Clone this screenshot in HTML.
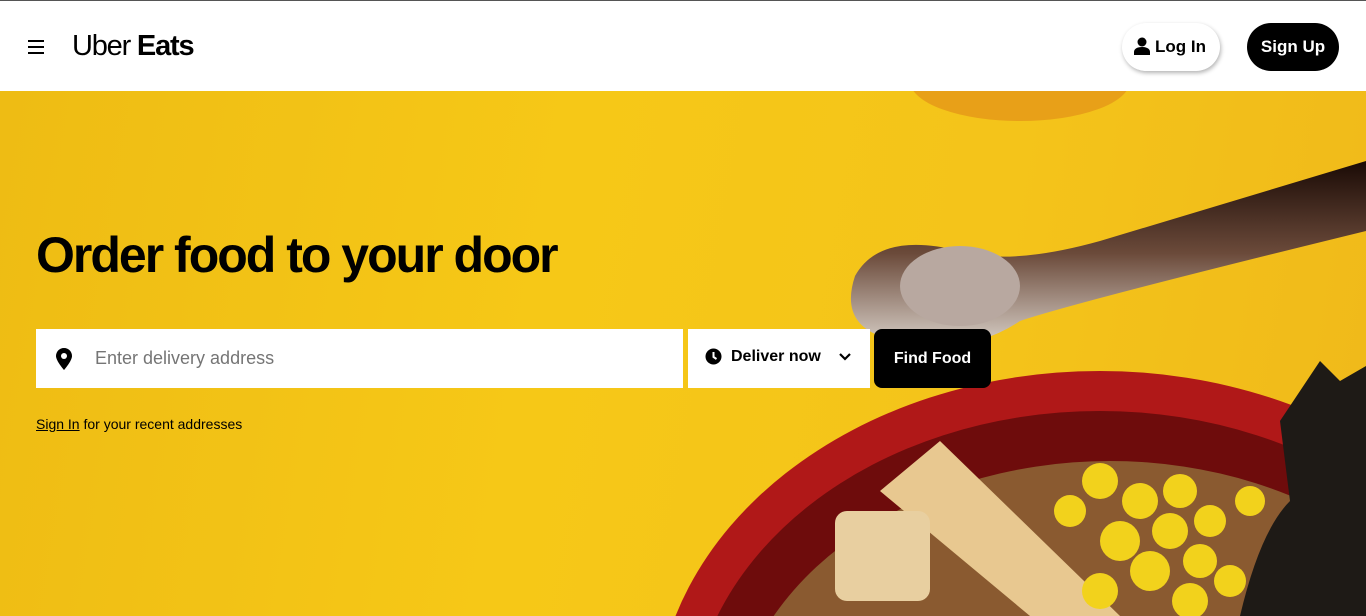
<!DOCTYPE html>
<html><head><meta charset="utf-8"><style>
*{margin:0;padding:0;box-sizing:border-box}
html,body{width:1366px;height:616px;overflow:hidden}
body{font-family:"Liberation Sans",Arial,sans-serif;background:#fff;position:relative}
.top{position:absolute;left:0;top:0;width:1366px;height:1px;background:#555}
header{position:absolute;top:1px;left:0;width:1366px;height:90px;background:#fff}
.burger{position:absolute;left:28px;top:39px;width:16px}
.burger i{display:block;height:2px;background:#000;margin-bottom:4px}
.logo{position:absolute;left:72px;top:29px;font-size:29px;letter-spacing:-1.2px;color:#000}
.logo b{font-weight:700}
.login{position:absolute;left:1122px;top:22px;width:98px;height:48px;border-radius:24px;background:#fff;box-shadow:1px 2px 4px rgba(0,0,0,.3);font-weight:700;font-size:17px;line-height:48px;padding-left:33px}
.signup{position:absolute;left:1247px;top:22px;width:92px;height:48px;border-radius:24px;background:#000;color:#fff;font-weight:700;font-size:17px;line-height:48px;text-align:center}
.hero{position:absolute;top:91px;left:0;width:1366px;height:525px;background:linear-gradient(100deg,#eebc14 0%,#f6c817 40%,#f4c41a 70%,#f0b91a 100%);overflow:hidden}
h1{position:absolute;left:36px;top:135px;font-size:50px;font-weight:700;letter-spacing:-2px;color:#000;white-space:nowrap}
.addr{position:absolute;left:36px;top:329px;width:647px;height:59px;background:#fff}
.addr span{position:absolute;left:59px;top:19px;font-size:18px;color:#757575}
.dl{position:absolute;left:688px;top:329px;width:182px;height:59px;background:#fff;font-weight:700;font-size:16px}
.dl span{position:absolute;left:43px;top:19px}
.ff{position:absolute;left:874px;top:329px;width:117px;height:59px;background:#000;border-radius:8px;color:#fff;font-weight:700;font-size:16px;line-height:59px;text-align:center}
.sign{position:absolute;left:36px;top:416px;font-size:14px;color:#000;white-space:nowrap}
.sign u{text-decoration:underline}
</style></head><body>
<div class="top"></div>
<header>
<div class="burger"><i></i><i></i><i></i></div>
<div class="logo">Uber <b>Eats</b></div>
<div class="login"><svg style="position:absolute;left:12px;top:14px" width="16" height="18" viewBox="0 0 16 18"><circle cx="8" cy="5" r="4.5"/><path d="M0 18v-3c0-3 3-5 8-5s8 2 8 5v3z"/></svg>Log In</div>
<div class="signup">Sign Up</div>
</header>
<div class="hero">
<svg width="1366" height="525" style="position:absolute;left:0;top:0">
<defs>
<linearGradient id="sp" x1="0" y1="0" x2="0" y2="1"><stop offset="0" stop-color="#1a0a05"/><stop offset=".5" stop-color="#6b4a3a"/><stop offset="1" stop-color="#d8d0c8"/></linearGradient>
</defs>
<ellipse cx="1020" cy="-10" rx="110" ry="40" fill="#e8a018"/>
<path d="M1366 70 L1100 150 Q1010 175 960 160 Q880 140 855 185 Q840 230 880 245 Q960 270 1020 230 Q1080 210 1366 140Z" fill="url(#sp)"/>
<ellipse cx="960" cy="195" rx="60" ry="40" fill="#b8a8a0"/>
<ellipse cx="1100" cy="630" rx="445" ry="350" fill="#b01818"/>
<ellipse cx="1100" cy="640" rx="410" ry="320" fill="#6e0c0c"/>
<ellipse cx="1110" cy="660" rx="380" ry="290" fill="#8a5a30"/>
<path d="M880 400 L940 350 L1120 525 L1030 525Z" fill="#e8c890"/>
<rect x="835" y="420" width="95" height="90" rx="12" fill="#e8cfa0"/>
<g fill="#f2d21c">
<circle cx="1100" cy="390" r="18"/><circle cx="1140" cy="410" r="18"/><circle cx="1070" cy="420" r="16"/><circle cx="1180" cy="400" r="17"/><circle cx="1170" cy="440" r="18"/><circle cx="1120" cy="450" r="20"/><circle cx="1210" cy="430" r="16"/><circle cx="1150" cy="480" r="20"/><circle cx="1200" cy="470" r="17"/><circle cx="1100" cy="500" r="18"/><circle cx="1230" cy="490" r="16"/><circle cx="1190" cy="510" r="18"/><circle cx="1250" cy="410" r="15"/></g>
<path d="M1280 330 L1320 270 L1340 290 L1366 275 L1366 525 L1240 525 Q1260 440 1290 410Z" fill="#1e1a16"/>
</svg>
<h1>Order food to your door</h1>
</div>
<div class="addr"><svg style="position:absolute;left:19px;top:19px" width="18" height="22" viewBox="0 0 18 22"><path d="M9 0C4 0 1 4 1 8c0 5 8 14 8 14s8-9 8-14c0-4-3-8-8-8z"/><circle cx="9" cy="8" r="3" fill="#fff"/></svg><span>Enter delivery address</span></div>
<div class="dl"><svg style="position:absolute;left:17px;top:19px" width="17" height="17" viewBox="0 0 17 17"><circle cx="8.5" cy="8.5" r="8"/><path d="M8.5 4v5l3 2" stroke="#fff" stroke-width="2" fill="none"/></svg><span>Deliver now</span><svg style="position:absolute;left:150px;top:23px" width="14" height="10" viewBox="0 0 14 10"><path d="M2 2l5 5 5-5" stroke="#000" stroke-width="2.2" fill="none"/></svg></div>
<div class="ff">Find Food</div>
<div class="sign"><u>Sign In</u> for your recent addresses</div>
</body></html>
